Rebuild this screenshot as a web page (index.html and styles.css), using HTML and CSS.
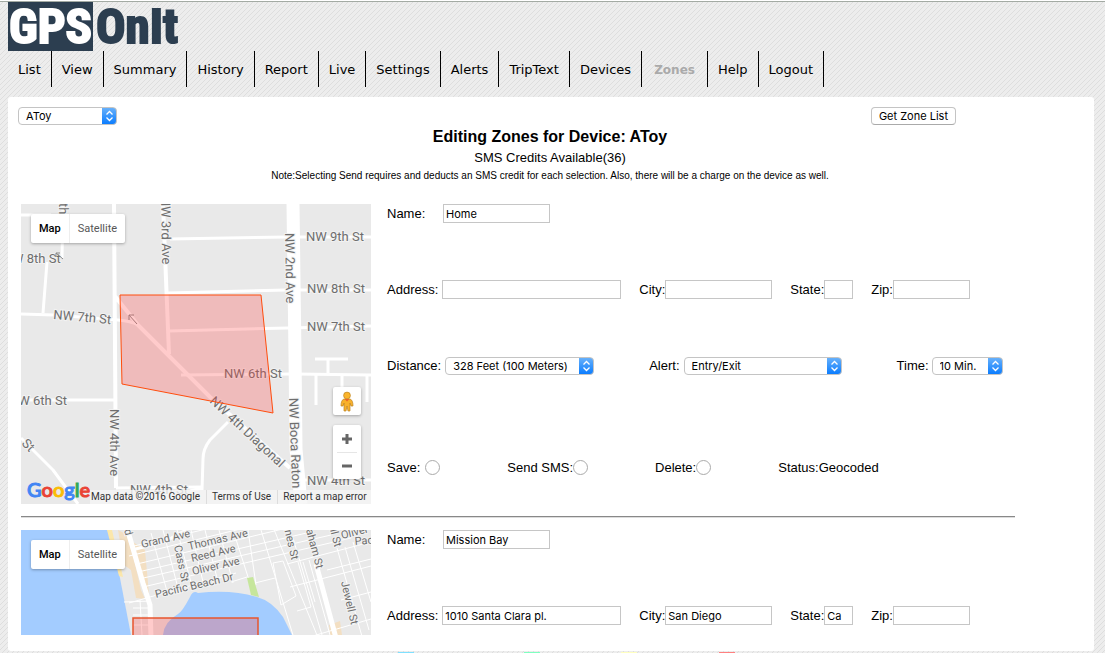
FILE: index.html
```html
<!DOCTYPE html>
<html lang="en">
<head>
<meta charset="utf-8">
<meta name="viewport" content="width=device-width, initial-scale=1">
<title>GPSOnIt - Zones</title>
<link rel="stylesheet" href="styles.css">
</head>
<body>
<header class="masthead">
  <a class="logo" href="#"><span class="logo-box">GPS</span><span class="logo-rest">OnIt</span></a>
  <nav class="menu">
    <a href="#">List</a><a href="#">View</a><a href="#">Summary</a><a href="#">History</a><a href="#">Report</a><a href="#">Live</a><a href="#">Settings</a><a href="#">Alerts</a><a href="#">TripText</a><a href="#">Devices</a><a class="current" href="#">Zones</a><a href="#">Help</a><a href="#">Logout</a>
  </nav>
</header>

<main class="panel">
  <div class="toolbar">
    <select class="select select-device" aria-label="Device"><option>AToy</option></select>
    <button class="button" type="button">Get Zone List</button>
  </div>
  <div class="heading">
    <h1>Editing Zones for Device: AToy</h1>
    <p class="credits">SMS Credits Available(36)</p>
    <p class="note">Note:Selecting Send requires and deducts an SMS credit for each selection. Also, there will be a charge on the device as well.</p>
  </div>

  <div class="zones">
    <section class="zone">
      <div class="map">
        <svg class="map-art" viewBox="0 0 350 300" role="img" aria-label="Map of Home zone">
          <rect width="350" height="300" fill="#e9e9e9"/>
          <g fill="none" stroke="#fff" stroke-width="3" stroke-linejoin="round">
            <path d="M0 11H30M42 0L41 54M26 58L22 109M0 110L33 111L97 116Q110 117 117 121"/>
            <path d="M0 196H93M95 284L181 283M0 234L32 266L57 300"/>
            <path d="M149 35L266 33H350M147 89L266 86H350M148 127L267 124L350 122M160 171L275 170L350 171M275 276H350"/>
            <path d="M207 218L189 236Q182 245 182 255L181 286M169 287L181 284"/>
            <path d="M294 155H327M307 155V171M295 171V201M321 171V190M346 171V198"/>
            <path stroke-width="4" d="M93 0L95 284M142 0L148 150M93 91L117 121L169 173L189 193L269 264"/>
            <path stroke-width="13" d="M272 0L274 151L275 245L280 300"/>
          </g>
          <g class="street">
            <text x="285" y="37">NW 9th St</text>
            <text x="286" y="89">NW 8th St</text>
            <text x="286" y="127">NW 7th St</text>
            <text x="203" y="174">NW 6th St</text>
            <text x="286" y="281">NW 4th St</text>
            <text x="109" y="290">NW 4th St</text>
            <text x="-9" y="59">W 8th St</text>
            <text x="-12" y="201">NW 6th St</text>
            <text transform="translate(32 115) rotate(5)">NW 7th St</text>
            <text transform="translate(38 -1) rotate(90)">th</text>
            <text transform="translate(140 -7) rotate(89)">NW 3rd Ave</text>
            <text transform="translate(264 29) rotate(89)">NW 2nd Ave</text>
            <text transform="translate(89 205) rotate(90)">NW 4th Ave</text>
            <text transform="translate(268 194) rotate(88)">NW Boca Raton</text>
            <text transform="translate(188 198) rotate(43)">NW 4th Diagonal</text>
            <text transform="translate(0 240) rotate(45)">St</text>
          </g>
          <g fill="none" stroke="#888" stroke-width="1">
            <path d="M116 120L108 111M108 116V111H113M42 55L35 49M35 53V49H39"/>
          </g>
          <path d="M99 91H240L252 209L101 180Z" fill="#f44" fill-opacity=".28" stroke="#ff4d0d" stroke-width="1"/>
        </svg>
        <div class="map-types"><button class="on" type="button">Map</button><button type="button">Satellite</button></div>
        <div class="map-controls">
          <button class="pegman" type="button" aria-label="Street View">
            <svg width="14" height="21" viewBox="0 0 14 21"><path d="M4 8H10Q13 9 13 15L11 15L10 12V20H8L7 15L6 20H4V12L3 15H1Q1 9 4 8Z" fill="#f9b12b" stroke="#bd8422" stroke-width=".7"/><circle cx="7" cy="4.500" r="3.400" fill="#fbb52b" stroke="#bd8422" stroke-width=".7"/><path d="M4.500 8H9.500L7 10.500Z" fill="#e8632b"/></svg>
          </button>
          <div class="zoom">
            <button type="button" aria-label="Zoom in"><svg width="12" height="12" viewBox="0 0 12 12"><path d="M1 6H11M6 1V11" stroke="#666" stroke-width="3"/></svg></button>
            <button type="button" aria-label="Zoom out"><svg width="12" height="12" viewBox="0 0 12 12"><path d="M1 6H11" stroke="#666" stroke-width="3"/></svg></button>
          </div>
        </div>
        <div class="map-footer">
          <span class="google"><span class="g-blue">G</span><span class="g-red">o</span><span class="g-yellow">o</span><span class="g-blue">g</span><span class="g-green">l</span><span class="g-red">e</span></span>
          <span class="terms"><span>Map data ©2016 Google</span><a href="#">Terms of Use</a><a href="#">Report a map error</a></span>
        </div>
      </div>
      <form class="fields">
        <div class="row row-name">
          <label for="name1">Name:</label><input class="text w-m" id="name1" type="text" value="Home">
        </div>
        <div class="row row-address">
          <div class="field spaced"><label for="addr1">Address:</label><input class="text w-l" id="addr1" type="text"></div>
          <div class="field"><label for="city1">City:</label><input class="text w-m" id="city1" type="text"></div>
          <div class="field"><label for="state1">State:</label><input class="text w-xs" id="state1" type="text"></div>
          <div class="field"><label for="zip1">Zip:</label><input class="text w-s" id="zip1" type="text"></div>
        </div>
        <div class="row row-rules">
          <div class="field spaced"><label for="dist1">Distance:</label><select class="select select-distance" id="dist1"><option>328 Feet (100 Meters)</option></select></div>
          <div class="field spaced"><label for="alert1">Alert:</label><select class="select select-alert" id="alert1"><option>Entry/Exit</option></select></div>
          <div class="field"><label for="time1">Time:</label><select class="select select-time" id="time1"><option>10 Min.</option></select></div>
        </div>
        <div class="row row-actions">
          <div class="field spaced"><label for="save1">Save:</label><input class="radio" id="save1" name="action" type="radio"></div>
          <div class="field"><label for="send1">Send SMS:</label><input class="radio" id="send1" name="action" type="radio"></div>
          <div class="field"><label for="del1">Delete:</label><input class="radio" id="del1" name="action" type="radio"></div>
          <span>Status:Geocoded</span>
        </div>
      </form>
    </section>

    <hr class="divider">

    <section class="zone">
      <div class="map">
        <svg class="map-art" viewBox="0 0 350 300" role="img" aria-label="Map of Mission Bay zone">
          <rect width="350" height="300" fill="#e9e9e9"/>
          <path d="M0 0H87L98 43L110 105V300H0Z" fill="#a3ccff"/>
          <path d="M86 0H91L102 47L98 46Z" fill="#fbe7ab"/>
          <path d="M97 0L105 4L112 25L120 60L124 69L115 68L110 40L103 35ZM112 12L124 20L126 42L128 65L123 60ZM308 95L319 91L321 105H309Z" fill="#f3dfc2"/>
          <g fill="none" stroke="#fff" stroke-width="1">
            <path d="M113 16L160 5L198 -4M108 26L240 -6M116 34L270 -3M117 42L290 2M118 49L310 5M122 57L330 8M108 73L136 65L215 43"/>
            <path d="M130 3L147 65M142 0L158 62M155 -4L172 60M170 0L182 52M184 0L196 48M198 0L212 53M212 0L228 50M227 0L235 55M240 0L275 115M252 -3L300 115M272 8L304 115"/>
            <path d="M210 52L226 47M234 53L254 48M252 33L262 31L275 66L260 75Z"/>
            <path d="M266 34L350 12M269 57L350 36M276 81L290 77L277 32M282 32L294 72M285 108L350 89M288 30L309 105M316 18L342 110M324 17L348 100M332 12L350 72M306 40L350 29M320 70L350 62"/>
            <path d="M103 72L130 71M112 78H128M112 85H129M112 95H130M119 70L121 105"/>
          </g>
          <path d="M142 105Q143 92 157 84Q161 82 169 67Q172 60 177 63Q210 59 236 67Q251 71 262 87L271 105V300H142Z" fill="#a3ccff"/>
          <path d="M226 48L232 47L238 67L230 65Z" fill="#c6e69c"/>
          <g fill="none" stroke="#fff" stroke-width="5">
            <path d="M106 -2L122 53L129 75L130 108M295 34L315 108"/>
            <path stroke-width="3" d="M111 20L145 11L165 0"/>
          </g>
          <g class="street street-small">
            <text transform="translate(121 18) rotate(-13)">Grand Ave</text>
            <text transform="translate(168 20) rotate(-13)">Thomas Ave</text>
            <text transform="translate(171 32) rotate(-13)">Reed Ave</text>
            <text transform="translate(172 45) rotate(-13)">Oliver Ave</text>
            <text transform="translate(135 68) rotate(-13)">Pacific Beach Dr</text>
            <text transform="translate(153 16) rotate(78)">Cass St</text>
            <text transform="translate(103 0) rotate(75)">d</text>
            <text transform="translate(263 -2) rotate(77)">ines St</text>
            <text transform="translate(285 0) rotate(75)">aham St</text>
            <text transform="translate(309 0) rotate(75)">ll St</text>
            <text transform="translate(321 9) rotate(-14)">Oliver</text>
            <text transform="translate(334 15) rotate(-5)">Pac</text>
            <text transform="translate(320 52) rotate(77)">Jewell St</text>
          </g>
          <path d="M112 88H237V220H112Z" fill="#f44" fill-opacity=".28" stroke="#e8552e" stroke-width="1.500"/>
        </svg>
        <div class="map-types"><button class="on" type="button">Map</button><button type="button">Satellite</button></div>
      </div>
      <form class="fields">
        <div class="row row-name">
          <label for="name2">Name:</label><input class="text w-m" id="name2" type="text" value="Mission Bay">
        </div>
        <div class="row row-address">
          <div class="field spaced"><label for="addr2">Address:</label><input class="text w-l" id="addr2" type="text" value="1010 Santa Clara pl."></div>
          <div class="field"><label for="city2">City:</label><input class="text w-m" id="city2" type="text" value="San Diego"></div>
          <div class="field"><label for="state2">State:</label><input class="text w-xs" id="state2" type="text" value="Ca"></div>
          <div class="field"><label for="zip2">Zip:</label><input class="text w-s" id="zip2" type="text"></div>
        </div>
      </form>
    </section>
  </div>
</main>

<footer class="legend"><i class="sky"></i><i class="mint"></i><i class="lemon"></i><i class="rose"></i></footer>
</body>
</html>
```
FILE: styles.css
```css
* { box-sizing: border-box; }

body {
  margin: 0;
  height: 100vh;
  overflow: hidden;
  display: flex;
  flex-direction: column;
  padding: 0 11px 0 8px;
  border-top: 1px solid #fff;
  color: #000;
  font: 13px/16px Arial, "Liberation Sans", sans-serif;
  background: #ededed url("data:image/svg+xml,%3Csvg xmlns='http://www.w3.org/2000/svg' width='5' height='5'%3E%3Cpath d='M-1 1L1 -1M0 5L5 0M4 6L6 4' stroke='%23dadada' stroke-width='.8'/%3E%3C/svg%3E");
}

a { color: inherit; text-decoration: none; }
button, input, select { font: 11px/14px Inter, sans-serif; color: #000; margin: 0; }
button { border: 0; padding: 0; background: none; }

.masthead {
  margin: 0 -11px 10px -8px;
  padding-left: 8px;
  border-top: 1px solid #a3aaa3;
}

.logo {
  display: flex;
  width: max-content;
  height: 49px;
  font: bold 49px/50px Impact, "Liberation Sans Narrow", "Roboto Condensed", sans-serif;
  color: #2c3e50;
}
.logo-box { width: 85px; text-align: center; background: #2c3e50; color: #fff; }
.logo-box, .logo-rest { -webkit-text-stroke: 2px currentColor; }
.logo-rest { padding-left: 3px; }

.menu { display: flex; font: 13px/36px Verdana, "DejaVu Sans", sans-serif; }
.menu a { height: 36px; padding: 1px 10px 0; border-right: 1px solid #000; }
.menu .current { padding: 1px 12px 0; color: #aaa; font-size: 12px; font-weight: bold; }

.panel {
  flex: 1;
  min-height: 0;
  display: flex;
  flex-direction: column;
  padding: 10px 10px 16px;
  background: #fff;
  border-radius: 3px;
}

.toolbar { display: flex; justify-content: space-between; padding-right: 128px; }

.select {
  appearance: none;
  height: 18px;
  padding: 0 16px 0 7px;
  border: 1px solid #c4c4c4;
  border-radius: 4px;
  background: #fff url("data:image/svg+xml,%3Csvg xmlns='http://www.w3.org/2000/svg' width='15' height='18'%3E%3Cdefs%3E%3ClinearGradient id='g' x2='0' y2='1'%3E%3Cstop stop-color='%236cb3fa'/%3E%3Cstop offset='1' stop-color='%23067aff'/%3E%3C/linearGradient%3E%3C/defs%3E%3Cpath d='M0 0H11Q15 0 15 4V14Q15 18 11 18H0Z' fill='url(%23g)'/%3E%3Cpath d='M4.500 7.500L7.500 4.500L10.500 7.500M4.500 10.500L7.500 13.500L10.500 10.500' fill='none' stroke='white' stroke-width='1.300'/%3E%3C/svg%3E") no-repeat right / 15px 18px border-box;
}
.select-device { width: 99px; }
.select-distance { width: 149px; }
.select-alert { width: 158px; }
.select-time { width: 71px; }

.button {
  height: 18px;
  padding: 0 7px;
  border: 1px solid #c4c4c4;
  border-bottom-color: #aaa;
  border-radius: 4px;
  background: #fff;
}

.heading { text-align: center; padding: 2px 2px 0 0; }
.heading h1 { margin: 0; font-size: 16px; line-height: 20px; }
.heading p { margin: 0; }
.heading .credits { line-height: 22px; }
.heading .note { font-size: 10px; line-height: 14px; }

.zones {
  flex: 1;
  min-height: 0;
  margin-top: 21px;
  padding: 0 69px 0 3px;
  overflow-y: auto;
  scrollbar-width: none;
}

.zone { display: flex; gap: 16px; }
.divider { margin: 12px 0; border: 0; height: 2px; border-top: 1px solid #888; border-bottom: 1px solid #ddd; }

.map { position: relative; flex: none; width: 350px; height: 300px; overflow: hidden; }
.map-art { display: block; width: 100%; height: 100%; }
.street {
  font: 13px Roboto, sans-serif;
  fill: #6e6e6e;
  stroke: #f2f2f2;
  stroke-width: 2px;
  paint-order: stroke;
}
.street-small { font-size: 11px; }

.map-types {
  position: absolute;
  left: 10px;
  top: 10px;
  display: flex;
  height: 29px;
  background: #fff;
  border-radius: 2px;
  box-shadow: 0 1px 3px rgba(0, 0, 0, .3);
}
.map-types button { padding: 0 8px; font: 11px Roboto, sans-serif; color: #565656; }
.map-types .on { color: #000; font-weight: 500; border-right: 1px solid #eee; }

.map-controls { position: absolute; right: 10px; top: 183px; display: grid; gap: 10px; }
.pegman, .zoom { width: 28px; background: #fff; border-radius: 2px; box-shadow: 0 1px 3px rgba(0, 0, 0, .3); }
.pegman { height: 28px; display: grid; place-items: center; }
.zoom { display: grid; }
.zoom button { height: 27px; display: grid; place-items: center; }
.zoom button + button { margin: 0 4px; border-top: 1px solid #e6e6e6; }

.map-footer {
  position: absolute;
  inset: auto 0 0 6px;
  display: flex;
  align-items: flex-end;
  justify-content: space-between;
  white-space: nowrap;
}
.google { padding-bottom: 2px; font: 500 20px/26px Lato, sans-serif; -webkit-text-stroke: 1px currentColor; }
.g-blue { color: #4285f4; }
.g-red { color: #ea4335; }
.g-yellow { color: #fbbc05; }
.g-green { color: #34a853; }
.terms { display: flex; background: rgba(245, 245, 245, .8); font: 10px/14px Roboto, sans-serif; color: #333; }
.terms > * { padding: 0 6px 0 5px; }
.terms span { padding-left: 1px; }
.terms a { border-left: 1px solid #ddd; }

.fields { flex: 1; display: flex; flex-direction: column; gap: 57px; white-space: nowrap; }
.row { display: flex; align-items: center; height: 19px; }
.field { display: flex; align-items: center; }
.row-rules .field { gap: 3px; }
.field.spaced { gap: 4px; }
.row-name label { width: 56px; }
.row-address { gap: 18px; }
.row-rules { gap: 55px; height: 20px; }
.row-actions { gap: 67px; margin-top: 25px; }
.row-actions .spaced { gap: 5px; }

.text { height: 19px; padding: 1px 2px; border: 1px solid #c6c6c6; border-radius: 0; background: #fff; }
.w-l { width: 179px; }
.w-m { width: 107px; }
.w-s { width: 77px; }
.w-xs { width: 29px; }

.radio { appearance: none; width: 15px; height: 15px; border: 1px solid #aaa; border-radius: 50%; background: #fff; }
.radio:checked { border: 5px solid #067aff; }

.legend { flex: none; height: 2px; display: flex; justify-content: center; padding: 1px 0 0 30px; overflow: hidden; }
.legend i { width: 16px; height: 16px; }
.sky { background: #7fe0ff; margin-right: 110px; }
.mint { background: #7fffc0; margin-right: 81px; }
.lemon { background: #ffffc0; margin-right: 82px; }
.rose { background: #ff8080; }
```
